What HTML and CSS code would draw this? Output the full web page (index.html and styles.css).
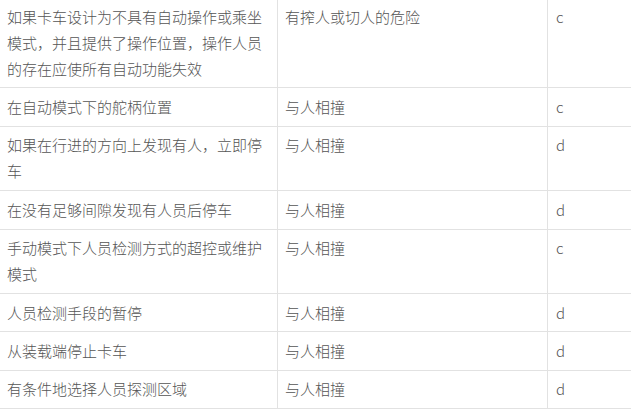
FILE: index.html
```html
<!DOCTYPE html>
<html lang="zh-CN">
<head>
<meta charset="utf-8">
<link rel="stylesheet" href="styles.css">
</head>
<body>
<div class="frame">
<table class="risk-table">
  <colgroup>
    <col class="c1">
    <col class="c2">
    <col class="c3">
  </colgroup>
  <tbody>
    <tr><td>如果卡车设计为不具有自动操作或乘坐模式，并且提供了操作位置，操作人员的存在应使所有自动功能失效</td><td>有搾人或切人的危险</td><td>c</td></tr>
    <tr><td>在自动模式下的舵柄位置</td><td>与人相撞</td><td>c</td></tr>
    <tr><td>如果在行进的方向上发现有人，立即停车</td><td>与人相撞</td><td>d</td></tr>
    <tr><td>在没有足够间隙发现有人员后停车</td><td>与人相撞</td><td>d</td></tr>
    <tr><td>手动模式下人员检测方式的超控或维护模式</td><td>与人相撞</td><td>c</td></tr>
    <tr><td>人员检测手段的暂停</td><td>与人相撞</td><td>d</td></tr>
    <tr><td>从装载端停止卡车</td><td>与人相撞</td><td>d</td></tr>
    <tr><td>有条件地选择人员探测区域</td><td>与人相撞</td><td>d</td></tr>
  </tbody>
</table>
</div>
</body>
</html>
```
FILE: styles.css
```css
html, body {
  margin: 0;
  padding: 0;
  background: #ffffff;
}
.frame {
  width: 631px;
  height: 412px;
  overflow: hidden;
}
.risk-table {
  border-collapse: collapse;
  table-layout: fixed;
  width: 633px;
  margin-top: -3px;
  margin-left: -1px;
  font-family: "Noto Sans CJK SC", "Noto Sans", sans-serif;
  font-size: 15px;
  font-weight: 300;
  line-height: 26px;
  color: #555555;
}
.c1 { width: 278px; }
.c2 { width: 270px; }
.c3 { width: 85px; }
.risk-table td {
  border: 1px solid #e2e2e2;
  padding: 5.7px 7px;
  vertical-align: top;
  text-align: left;
  word-break: break-all;
}
.risk-table td:nth-child(3) {
  padding-left: 8px;
}
```
